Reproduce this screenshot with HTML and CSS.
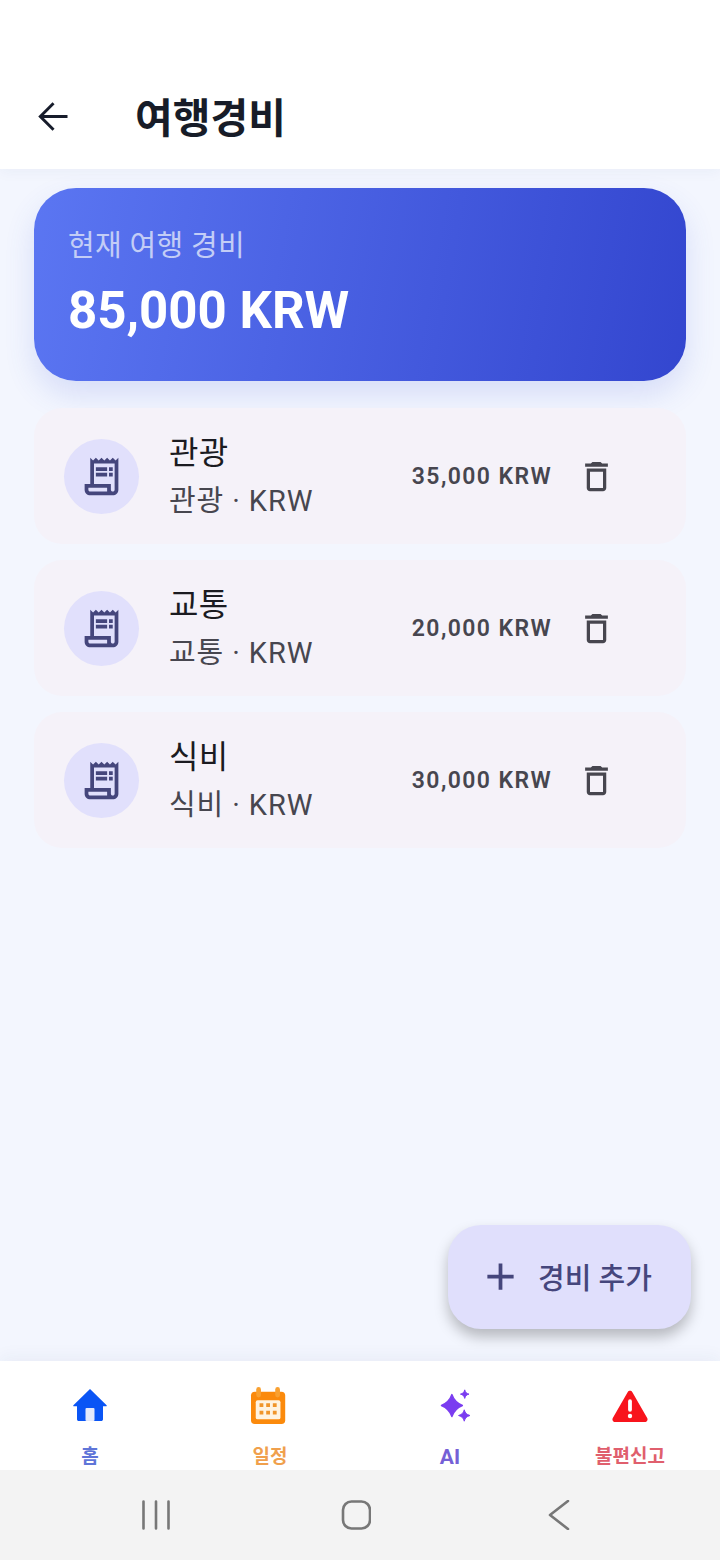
FILE: index.html
```html
<!DOCTYPE html>
<html lang="ko">
<head>
<meta charset="UTF-8">
<meta name="viewport" content="width=device-width, initial-scale=1.0">
<title>여행경비</title>
<link rel="stylesheet" href="styles.css">
</head>
<body>

<div class="app">
  <header class="top-bar">
    <svg class="icon-back" viewBox="0 0 24 24"><path d="M20 11.2H7.4l5.7-5.7-1.1-1.1-7.6 7.6 7.6 7.6 1.1-1.1-5.7-5.7H20z"/></svg>
    <h1 class="top-title">여행경비</h1>
  </header>

  <main class="content">
    <section class="total-card">
      <div class="total-label">현재 여행 경비</div>
      <div class="total-amount">85,000 KRW</div>
    </section>

    <div class="expense-list">
      <div class="expense-item">
        <div class="expense-icon">
          <svg viewBox="0 0 24 24"><path d="M19.5 3.5L18 2l-1.5 1.5L15 2l-1.5 1.5L12 2l-1.5 1.5L9 2 7.5 3.5 6 2v14H3v3c0 1.66 1.34 3 3 3h12c1.66 0 3-1.34 3-3V2l-1.5 1.5zM15 20H6c-.55 0-1-.45-1-1v-1h10v2zm4-1c0 .55-.45 1-1 1s-1-.45-1-1v-3H8V5h11v14z"/><path d="M9 7h6v2H9zm7 0h2v2h-2zm-7 3h6v2H9zm7 0h2v2h-2z"/></svg>
        </div>
        <div class="expense-text">
          <div class="expense-name">관광</div>
          <div class="expense-sub">관광 · KRW</div>
        </div>
        <div class="expense-amount">35,000 KRW</div>
        <svg class="icon-delete" viewBox="0 0 24 24"><path d="M16 9v10H8V9h8m-1.5-6h-5l-1 1H5v2h14V4h-3.5l-1-1zM18 7H6v12c0 1.1.9 2 2 2h8c1.1 0 2-.9 2-2V7z"/></svg>
      </div>

      <div class="expense-item">
        <div class="expense-icon">
          <svg viewBox="0 0 24 24"><path d="M19.5 3.5L18 2l-1.5 1.5L15 2l-1.5 1.5L12 2l-1.5 1.5L9 2 7.5 3.5 6 2v14H3v3c0 1.66 1.34 3 3 3h12c1.66 0 3-1.34 3-3V2l-1.5 1.5zM15 20H6c-.55 0-1-.45-1-1v-1h10v2zm4-1c0 .55-.45 1-1 1s-1-.45-1-1v-3H8V5h11v14z"/><path d="M9 7h6v2H9zm7 0h2v2h-2zm-7 3h6v2H9zm7 0h2v2h-2z"/></svg>
        </div>
        <div class="expense-text">
          <div class="expense-name">교통</div>
          <div class="expense-sub">교통 · KRW</div>
        </div>
        <div class="expense-amount">20,000 KRW</div>
        <svg class="icon-delete" viewBox="0 0 24 24"><path d="M16 9v10H8V9h8m-1.5-6h-5l-1 1H5v2h14V4h-3.5l-1-1zM18 7H6v12c0 1.1.9 2 2 2h8c1.1 0 2-.9 2-2V7z"/></svg>
      </div>

      <div class="expense-item">
        <div class="expense-icon">
          <svg viewBox="0 0 24 24"><path d="M19.5 3.5L18 2l-1.5 1.5L15 2l-1.5 1.5L12 2l-1.5 1.5L9 2 7.5 3.5 6 2v14H3v3c0 1.66 1.34 3 3 3h12c1.66 0 3-1.34 3-3V2l-1.5 1.5zM15 20H6c-.55 0-1-.45-1-1v-1h10v2zm4-1c0 .55-.45 1-1 1s-1-.45-1-1v-3H8V5h11v14z"/><path d="M9 7h6v2H9zm7 0h2v2h-2zm-7 3h6v2H9zm7 0h2v2h-2z"/></svg>
        </div>
        <div class="expense-text">
          <div class="expense-name">식비</div>
          <div class="expense-sub">식비 · KRW</div>
        </div>
        <div class="expense-amount">30,000 KRW</div>
        <svg class="icon-delete" viewBox="0 0 24 24"><path d="M16 9v10H8V9h8m-1.5-6h-5l-1 1H5v2h14V4h-3.5l-1-1zM18 7H6v12c0 1.1.9 2 2 2h8c1.1 0 2-.9 2-2V7z"/></svg>
      </div>
    </div>

    <button class="btn-add">
      <svg viewBox="0 0 24 24"><path d="M19 13h-6v6h-2v-6H5v-2h6V5h2v6h6z"/></svg>
      <span>경비 추가</span>
    </button>
  </main>

  <nav class="bottom-nav">
    <div class="nav-item nav-home">
      <svg class="nav-icon" viewBox="0 0 38 38">
        <path d="M19 2 35.600 18.200c.4.5.1 1.100-.5 1.100H32v12.900c0 1-.8 1.800-1.800 1.800H7.800c-1 0-1.800-.8-1.800-1.800V19.300H2.900c-.6 0-.9-.6-.5-1.100z" fill="#0a55f5"/>
        <rect x="14.500" y="21" width="9" height="13" rx="1" fill="#e4e9fb"/>
      </svg>
      <span class="nav-label">홈</span>
    </div>
    <div class="nav-item nav-plan">
      <svg class="nav-icon" viewBox="2 0 40 40">
        <rect x="2" y="5" width="36" height="34" rx="4" fill="#fb8a0c"/>
        <rect x="7.500" y="0" width="5" height="11" rx="2.500" fill="#f9a030"/>
        <rect x="27.500" y="0" width="5" height="11" rx="2.500" fill="#f9a030"/>
        <rect x="7" y="14" width="26" height="20" rx="2" fill="#fff3e0"/>
        <path d="M11 17h4v4h-4zm7 0h4v4h-4zm7 0h4v4h-4zM11 25h4v4h-4zm7 0h4v4h-4zm7 0h4v4h-4z" fill="#f0952a"/>
      </svg>
      <span class="nav-label">일정</span>
    </div>
    <div class="nav-item nav-ai">
      <svg class="nav-icon" viewBox="-6 0 40 40">
        <path d="M16 8c2 6 5 9 11 11.500-6 2.500-9 5.500-11 11.500-2-6-5-9-11-11.500 6-2.500 9-5.500 11-11.500z" fill="#7a3cf0" stroke="#7a3cf0" stroke-width="1.500" stroke-linejoin="round"/>
        <path d="M29.500 3c.8 2.800 1.800 3.800 4.500 4.500-2.700.7-3.700 1.700-4.500 4.500-.8-2.800-1.800-3.800-4.500-4.500 2.700-.7 3.700-1.700 4.500-4.500z" fill="#7a3cf0" stroke="#7a3cf0" stroke-linejoin="round"/>
        <path d="M29 24c1 3.500 2.200 4.700 6 6-3.800 1.300-5 2.500-6 6-1-3.500-2.200-4.700-6-6 3.800-1.300 5-2.500 6-6z" fill="#7a3cf0" stroke="#7a3cf0" stroke-linejoin="round"/>
      </svg>
      <span class="nav-label">AI</span>
    </div>
    <div class="nav-item nav-report">
      <svg class="nav-icon" viewBox="0 0 40 40">
        <path d="M17.500 5.500c1.100-1.900 3.900-1.900 5 0l15.600 27c1.100 1.900-.3 4.300-2.500 4.300H4.400c-2.200 0-3.600-2.400-2.500-4.300z" fill="#f8141c"/>
        <rect x="18" y="13" width="4" height="13" rx="2" fill="#fff"/>
        <circle cx="20" cy="30.500" r="2.300" fill="#fff"/>
      </svg>
      <span class="nav-label">불편신고</span>
    </div>
  </nav>

  <div class="system-bar">
    <svg viewBox="0 0 30 30"><path d="M2.500 1.500v27M15 1.500v27M27.500 1.500v27"/></svg>
    <svg viewBox="0 0 30 30"><rect x="2" y="1.500" width="27" height="27" rx="8.500"/></svg>
    <svg viewBox="0 0 30 30"><path d="M27 1 9 15l18 14"/></svg>
  </div>
</div>

</body>
</html>
```

FILE: styles.css
```css
* {
  box-sizing: border-box;
}

body {
  margin: 0;
  font-family: Roboto, "Noto Sans CJK KR", sans-serif;
}

.app {
  width: 720px;
  height: 1560px;
  display: flex;
  flex-direction: column;
  background-color: #f3f6fe;
  overflow: hidden;
}

/* top bar */
.top-bar {
  height: 169px;
  flex-shrink: 0;
  padding: 63px 0 0 30px;
  display: flex;
  align-items: center;
  background-color: #fff;
  box-shadow: 0 2px 14px rgba(40, 60, 120, 0.05);
  position: relative;
}

.icon-back {
  width: 45px;
  height: 45px;
  fill: #171c2b;
}

.top-title {
  margin: -3px 0 0 60px;
  font-size: 41px;
  font-weight: 700;
  color: #171c28;
}

/* main */
.content {
  position: relative;
  flex: 1;
  min-height: 0;
  padding: 19px 34px 0;
}

.total-card {
  height: 193px;
  padding: 36px 34px 0;
  border-radius: 42px;
  background: linear-gradient(100deg, #5b76f2, #3346cf);
  box-shadow: 0 14px 30px rgba(70, 95, 220, 0.16);
}

.total-label {
  font-size: 29px;
  line-height: 44px;
  letter-spacing: 0.3px;
  color: #c3cdf6;
}

.total-amount {
  margin-top: 10px;
  font-size: 51px;
  line-height: 66px;
  font-weight: 700;
  color: #fff;
}

.expense-list {
  margin-top: 27px;
  display: flex;
  flex-direction: column;
  gap: 16px;
}

.expense-item {
  height: 136px;
  padding: 2px 70px 0 30px;
  display: flex;
  align-items: center;
  border-radius: 28px;
  background-color: #f5f2f9;
}

.expense-icon {
  width: 75px;
  height: 75px;
  margin-top: -2px;
  display: flex;
  align-items: center;
  justify-content: center;
  border-radius: 50%;
  background-color: #e1e0fc;
}

.expense-icon svg {
  width: 45px;
  height: 45px;
  fill: #45467c;
}

.expense-text {
  flex: 1;
  margin-left: 30px;
}

.expense-name {
  font-size: 32px;
  line-height: 48px;
  letter-spacing: 0.4px;
  color: #1b1b21;
}

.expense-sub {
  font-size: 29px;
  line-height: 48px;
  letter-spacing: 0.9px;
  color: #47464f;
}

.expense-amount {
  margin-top: -2px;
  font-size: 23px;
  font-weight: 600;
  letter-spacing: 1.4px;
  color: #47464f;
}

.icon-delete {
  width: 39px;
  height: 39px;
  margin-top: -2px;
  margin-left: 25px;
  fill: #47464f;
}

.btn-add {
  position: absolute;
  top: 1056px;
  left: 448px;
  width: 243px;
  height: 104px;
  padding: 0 0 2px 30px;
  display: flex;
  align-items: center;
  gap: 15px;
  border: none;
  border-radius: 33px;
  font-family: inherit;
  font-size: 29px;
  font-weight: 500;
  color: #45467c;
  background-color: #e0dffc;
  box-shadow: 0 8px 14px rgba(0, 0, 0, 0.25);
}

.btn-add svg {
  width: 45px;
  height: 45px;
  fill: #45467c;
}

/* bottom nav */
.bottom-nav {
  height: 109px;
  flex-shrink: 0;
  display: grid;
  grid-template-columns: repeat(4, 1fr);
  background-color: #fff;
  box-shadow: 0 -4px 16px rgba(40, 60, 120, 0.05);
  position: relative;
}

.nav-item {
  padding-top: 26px;
  display: flex;
  flex-direction: column;
  align-items: center;
}

.nav-icon {
  width: 38px;
  height: 38px;
  overflow: visible;
}

.nav-label {
  margin-top: 17px;
  font-size: 19px;
  line-height: 30px;
  font-weight: 700;
}

.nav-home .nav-label {
  color: #5f75d8;
}

.nav-plan .nav-label {
  color: #f0a04c;
}

.nav-ai .nav-label {
  font-size: 21px;
  color: #7560d6;
}

.nav-report .nav-label {
  color: #e05f6d;
}

/* android buttons */
.system-bar {
  height: 90px;
  flex-shrink: 0;
  padding: 0 0 0 141px;
  display: flex;
  align-items: center;
  gap: 170px;
  background-color: #f3f3f3;
  position: relative;
}

.system-bar svg {
  width: 30px;
  height: 30px;
  fill: none;
  stroke: #777;
  stroke-width: 2.600;
  stroke-linecap: round;
  stroke-linejoin: round;
}
```
